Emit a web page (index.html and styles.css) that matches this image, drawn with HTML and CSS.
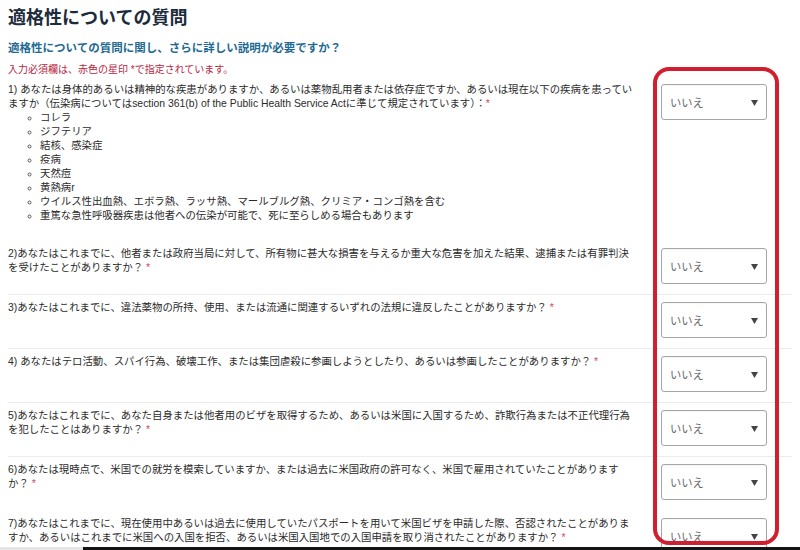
FILE: index.html
```html
<!DOCTYPE html>
<html lang="ja">
<head>
<meta charset="utf-8">
<link rel="stylesheet" href="styles.css">
</head>
<body>
<div class="page">
  <h1 class="title">適格性についての質問</h1>
  <h2 class="subtitle">適格性についての質問に関し、さらに詳しい説明が必要ですか？</h2>
  <p class="note">入力必須欄は、赤色の星印 *で指定されています。</p>

  <div class="row row-first">
    <div class="q">
      <p class="qtext">1) あなたは身体的あるいは精神的な疾患がありますか、あるいは薬物乱用者または依存症ですか、あるいは現在以下の疾病を患ってい<br>ますか（伝染病についてはsection 361(b) of the Public Health Service Actに準じて規定されています）：<span class="req">*</span></p>
      <ul class="list">
        <li>コレラ</li>
        <li>ジフテリア</li>
        <li>結核、感染症</li>
        <li>疫病</li>
        <li>天然痘</li>
        <li>黄熱病r</li>
        <li>ウイルス性出血熱、エボラ熱、ラッサ熱、マールブルグ熱、クリミア・コンゴ熱を含む</li>
        <li>重篤な急性呼吸器疾患は他者への伝染が可能で、死に至らしめる場合もあります</li>
      </ul>
    </div>
    <div class="select"><span class="val">いいえ</span><svg class="arrow" width="7" height="6" viewBox="0 0 7 6"><path d="M0 0H7L3.5 6Z" fill="#444"/></svg></div>
  </div>

  <div class="row line">
    <div class="q"><p class="qtext">2)あなたはこれまでに、他者または政府当局に対して、所有物に甚大な損害を与えるか重大な危害を加えた結果、逮捕または有罪判決<br>を受けたことがありますか？ <span class="req">*</span></p></div>
    <div class="select"><span class="val">いいえ</span><svg class="arrow" width="7" height="6" viewBox="0 0 7 6"><path d="M0 0H7L3.5 6Z" fill="#444"/></svg></div>
  </div>

  <div class="row line">
    <div class="q"><p class="qtext">3)あなたはこれまでに、違法薬物の所持、使用、または流通に関連するいずれの法規に違反したことがありますか？ <span class="req">*</span></p></div>
    <div class="select"><span class="val">いいえ</span><svg class="arrow" width="7" height="6" viewBox="0 0 7 6"><path d="M0 0H7L3.5 6Z" fill="#444"/></svg></div>
  </div>

  <div class="row line">
    <div class="q"><p class="qtext">4) あなたはテロ活動、スパイ行為、破壊工作、または集団虐殺に参画しようとしたり、あるいは参画したことがありますか？ <span class="req">*</span></p></div>
    <div class="select"><span class="val">いいえ</span><svg class="arrow" width="7" height="6" viewBox="0 0 7 6"><path d="M0 0H7L3.5 6Z" fill="#444"/></svg></div>
  </div>

  <div class="row line">
    <div class="q"><p class="qtext">5)あなたはこれまでに、あなた自身または他者用のビザを取得するため、あるいは米国に入国するため、詐欺行為または不正代理行為<br>を犯したことはありますか？ <span class="req">*</span></p></div>
    <div class="select"><span class="val">いいえ</span><svg class="arrow" width="7" height="6" viewBox="0 0 7 6"><path d="M0 0H7L3.5 6Z" fill="#444"/></svg></div>
  </div>

  <div class="row">
    <div class="q"><p class="qtext">6)あなたは現時点で、米国での就労を模索していますか、または過去に米国政府の許可なく、米国で雇用されていたことがあります<br>か？ <span class="req">*</span></p></div>
    <div class="select"><span class="val">いいえ</span><svg class="arrow" width="7" height="6" viewBox="0 0 7 6"><path d="M0 0H7L3.5 6Z" fill="#444"/></svg></div>
  </div>

  <div class="row">
    <div class="q"><p class="qtext">7)あなたはこれまでに、現在使用中あるいは過去に使用していたパスポートを用いて米国ビザを申請した際、否認されたことがありま<br>すか、あるいはこれまでに米国への入国を拒否、あるいは米国入国地での入国申請を取り消されたことがありますか？ <span class="req">*</span></p></div>
    <div class="select"><span class="val">いいえ</span><svg class="arrow" width="7" height="6" viewBox="0 0 7 6"><path d="M0 0H7L3.5 6Z" fill="#444"/></svg></div>
  </div>
</div>
<div class="highlight"></div>
<div class="taskbar"><div class="tb-left"></div><div class="tb-right"></div></div>
</body>
</html>
```
FILE: styles.css
```css
html, body {
  margin: 0;
  padding: 0;
  background: #fff;
  overflow: hidden;
}
body {
  width: 800px;
  height: 550px;
  font-family: "Liberation Sans", "Noto Sans CJK JP", sans-serif;
  color: #2b2b2b;
}
.page {
  padding: 6px 8px 0 8px;
}
.title {
  margin: 0;
  font-size: 18px;
  line-height: 24px;
  font-weight: bold;
  color: #1d2c3b;
}
.subtitle {
  margin: 10px 0 0 0;
  font-size: 11.5px;
  line-height: 16px;
  font-weight: bold;
  color: #1f6a92;
}
.note {
  margin: 7px 0 0 0;
  font-size: 10px;
  line-height: 14px;
  color: #b8253e;
}
.row {
  display: flex;
  align-items: flex-start;
  padding: 6px 0 10px 0;
  border-bottom: 1px solid transparent;
}
.row.line {
  border-bottom-color: #ececec;
}
.row-first {
  padding-bottom: 17px;
}
.q {
  flex: 0 0 640px;
}
.qtext {
  margin: 0;
  font-size: 10.4px;
  line-height: 14px;
}
.req {
  color: #d0485a;
}
.list {
  margin: 0;
  padding: 0 0 0 32px;
  list-style: circle;
  font-size: 10.4px;
  line-height: 14px;
}
.list li::marker {
  color: #555;
  font-size: 9px;
}
.select {
  flex: 0 0 auto;
  box-sizing: border-box;
  width: 106px;
  height: 36px;
  margin: 1px 0 0 13px;
  border: 1px solid #a6a6a6;
  border-radius: 3px;
  display: flex;
  align-items: center;
  justify-content: space-between;
  padding: 0 8px 0 8px;
  background: #fff;
  box-shadow: inset 0 1px 1px rgba(0,0,0,0.04);
}
.val {
  font-size: 11.3px;
  color: #6a6a6a;
}
.arrow {
  display: block;
  margin-top: 1px;
}
.highlight {
  position: absolute;
  left: 653px;
  top: 67px;
  width: 126px;
  height: 478px;
  box-sizing: border-box;
  border: 4px solid #d11f2f;
  border-radius: 16px;
}
.taskbar {
  position: absolute;
  left: 0;
  bottom: 0;
  width: 800px;
  height: 3px;
  display: flex;
}
.tb-left {
  width: 83px;
  background: #e4e4e4;
}
.tb-right {
  flex: 1;
  background: #141414;
}
```
